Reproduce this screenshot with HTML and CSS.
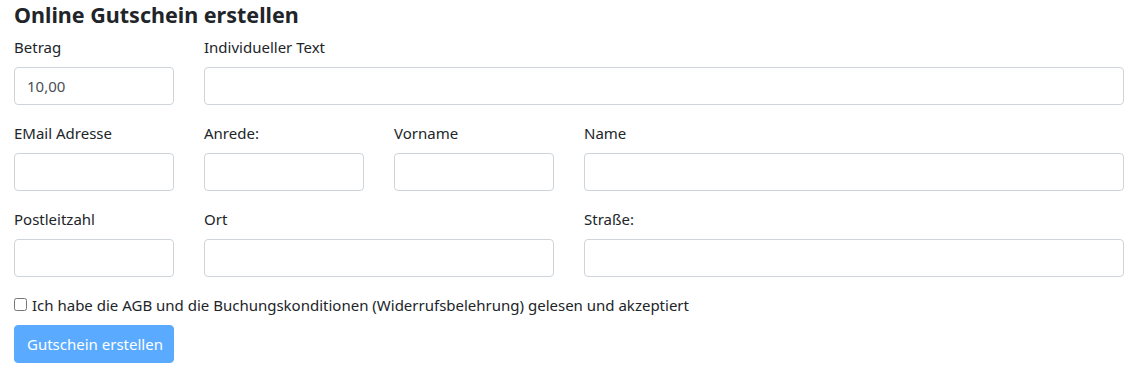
FILE: index.html
```html
<!DOCTYPE html>
<html lang="de">
<head>
  <meta charset="UTF-8">
  <meta name="viewport" content="width=device-width, initial-scale=1.0">
  <title>Online Gutschein erstellen</title>
  <link rel="stylesheet" href="styles.css">
</head>
<body>
  <div class="container">
    <h4 class="title">Online Gutschein erstellen</h4>

    <form class="voucher-form">
      <div class="form-row">
        <div class="form-group">
          <label for="betrag">Betrag</label>
          <input type="text" id="betrag" class="form-control" value="10,00">
        </div>
        <div class="form-group span-rest">
          <label for="text">Individueller Text</label>
          <input type="text" id="text" class="form-control">
        </div>
      </div>

      <div class="form-row">
        <div class="form-group">
          <label for="email">EMail Adresse</label>
          <input type="text" id="email" class="form-control">
        </div>
        <div class="form-group">
          <label for="anrede">Anrede:</label>
          <input type="text" id="anrede" class="form-control">
        </div>
        <div class="form-group">
          <label for="vorname">Vorname</label>
          <input type="text" id="vorname" class="form-control">
        </div>
        <div class="form-group span-last">
          <label for="name">Name</label>
          <input type="text" id="name" class="form-control">
        </div>
      </div>

      <div class="form-row">
        <div class="form-group">
          <label for="plz">Postleitzahl</label>
          <input type="text" id="plz" class="form-control">
        </div>
        <div class="form-group span-two">
          <label for="ort">Ort</label>
          <input type="text" id="ort" class="form-control">
        </div>
        <div class="form-group span-last">
          <label for="strasse">Straße:</label>
          <input type="text" id="strasse" class="form-control">
        </div>
      </div>

      <div class="form-check">
        <input type="checkbox" id="agb">
        <label for="agb">Ich habe die AGB und die Buchungskonditionen (Widerrufsbelehrung) gelesen und akzeptiert</label>
      </div>

      <button type="submit" class="btn-primary" disabled>Gutschein erstellen</button>
    </form>
  </div>
</body>
</html>
```

FILE: styles.css
```css
body {
  margin: 0;
  padding: 0;
  font-family: 'Noto Sans', 'Open Sans', sans-serif;
  font-size: 16px;
  line-height: 1.5;
  color: #212529;
  background-color: #fff;
}

.container {
  width: 1110px;
  padding: 0 14px;
}

.title {
  font-size: 21.5px;
  font-weight: 700;
  line-height: 1.2;
  margin: 2px 0 7px;
}

.form-row {
  display: grid;
  grid-template-columns: 160px 160px 160px 1fr;
  column-gap: 30px;
}

.form-group {
  margin-bottom: 16px;
}

.span-rest {
  grid-column: 2 / 5;
}

.span-two {
  grid-column: 2 / 4;
}

.span-last {
  grid-column: 4 / 5;
}

.form-group label {
  display: block;
  margin-bottom: 8px;
  font-size: 15px;
  line-height: 24px;
}

.form-control {
  display: block;
  box-sizing: border-box;
  width: 100%;
  height: 38px;
  padding: 6px 12px;
  font-family: inherit;
  font-size: 15px;
  color: #495057;
  background-color: #fff;
  border: 1px solid #ced4da;
  border-radius: 4px;
}

.form-check {
  display: flex;
  align-items: center;
  height: 24px;
  margin-bottom: 8px;
  font-size: 15px;
}

.form-check input {
  width: 13px;
  height: 13px;
  margin: 0 5px 0 0;
}

.btn-primary {
  display: block;
  box-sizing: border-box;
  width: 160px;
  height: 38px;
  padding: 6px 12px;
  font-family: inherit;
  font-size: 15px;
  white-space: nowrap;
  color: #fff;
  background-color: #5aabff;
  border: 1px solid #5aabff;
  border-radius: 4px;
}
```
